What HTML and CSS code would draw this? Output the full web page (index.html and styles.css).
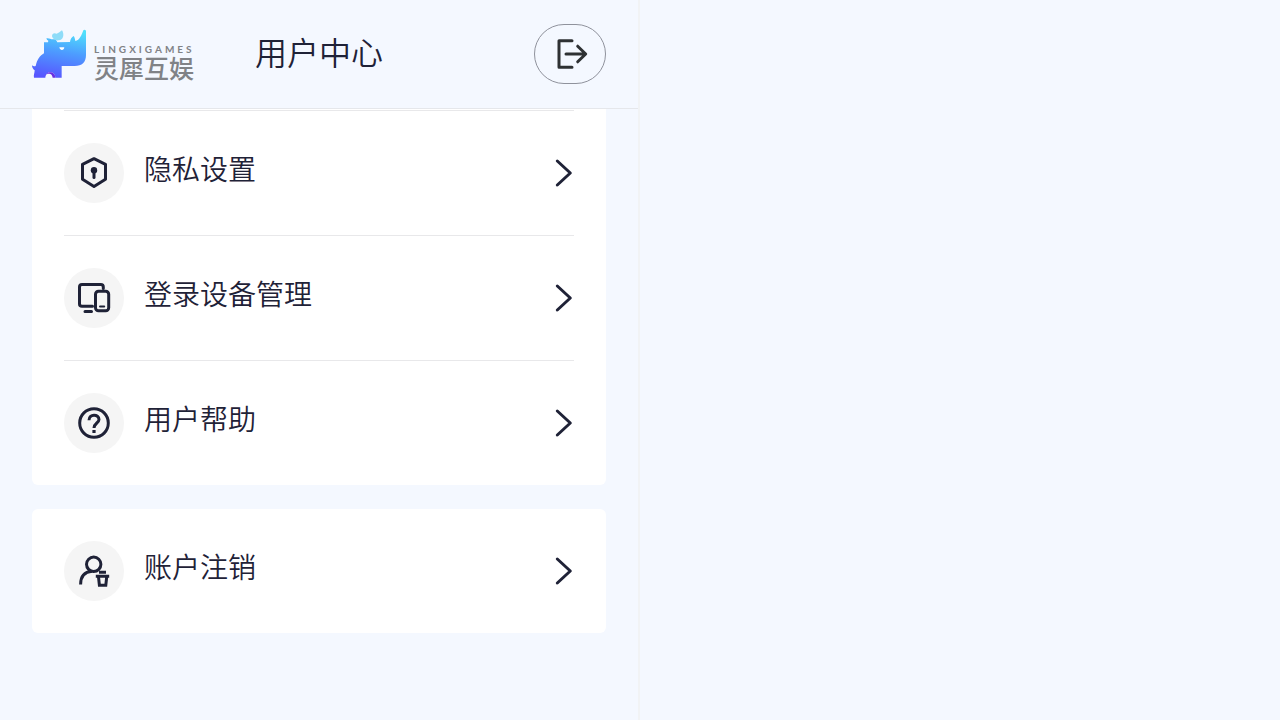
FILE: index.html
```
<!DOCTYPE html>
<html lang="zh-CN">
<head>
  <meta charset="UTF-8">
  <meta name="viewport" content="width=device-width, initial-scale=1.0">
  <title>用户中心</title>
  <link rel="stylesheet" href="styles.css">
</head>
<body>
  <div class="panel">
    <header class="header">
      <a class="logo" href="#">
        <svg class="logo-mark" viewBox="0 0 168 150" aria-hidden="true">
          <defs>
            <linearGradient id="body" x1="0.6" y1="0" x2="0.4" y2="1">
              <stop offset="0" stop-color="#4fe0fb"/>
              <stop offset="0.45" stop-color="#4d9dff"/>
              <stop offset="1" stop-color="#5757ff"/>
            </linearGradient>
          </defs>
          <path d="M60 22C60 14 66 10 74 14C80 12 84 8 90 4C98 16 94 34 80 34C70 35 62 30 60 22Z" fill="#8edcf8"/>
          <path d="M43 28C50 26 56 30 62 31C68 30 74 32 76 40L114 39C115 31 119 24 125 21C128 25 129 30 130 36C143 34 149 18 154 4Q158 0 162 5V78C162 100 150 111 128 111H89V146H70C70 124 40 124 40 146H6C4 138 8 132 8 124C4 122 0 116 0 109C4 113 8 112 11 111C15 92 24 80 36 73V40H48L49 35Q44 34 43 28Z" fill="url(#body)"/>
          <path d="M40 146C40 124 70 124 70 146H62C60 136 54 130 40 138Z" fill="#6a2fe0"/>
          <path d="M82 55H97C96 66 84 66 82 55Z" fill="#fff"/>
        </svg>
        <span class="logo-text">
          <span class="logo-en">LINGXIGAMES</span>
          <span class="logo-cn">灵犀互娱</span>
        </span>
      </a>
      <h1 class="title">用户中心</h1>
      <button class="logout" type="button" aria-label="退出登录">
        <svg viewBox="0 0 72 60" aria-hidden="true">
          <path d="M38 16.7H25V43.2H38M32 30H51M43.7 22.2L51.7 30L43.7 37.8"/>
        </svg>
      </button>
    </header>

    <main class="content">
      <nav class="card card-joined">
        <a class="item" href="#">
          <svg class="icon" viewBox="0 0 60 60" aria-hidden="true">
            <path d="M30 15.7L41.5 21.3V36.3L30 43.6L18.5 36.3V21.3Z"/>
            <circle class="solid" cx="30" cy="27.3" r="3.2"/>
            <path d="M30 28V34.5"/>
          </svg>
          <span class="label">隐私设置</span>
          <svg class="arrow" viewBox="0 0 20 30" aria-hidden="true"><path d="M3.3 3L16.3 15L3.3 27"/></svg>
        </a>
        <a class="item" href="#">
          <svg class="icon" viewBox="0 0 60 60" aria-hidden="true">
            <path d="M39.3 20.5V19Q39.3 16.5 36.8 16.5H18Q15.5 16.5 15.5 19V36Q15.5 38.3 18 38.3H28.5M21 43.6H27.5"/>
            <rect x="31.5" y="23.3" width="13.2" height="19.5" rx="3"/>
            <path class="thin" d="M36 38.6H40.2"/>
          </svg>
          <span class="label">登录设备管理</span>
          <svg class="arrow" viewBox="0 0 20 30" aria-hidden="true"><path d="M3.3 3L16.3 15L3.3 27"/></svg>
        </a>
        <a class="item" href="#">
          <svg class="icon" viewBox="0 0 60 60" aria-hidden="true">
            <circle cx="30" cy="30" r="14.3"/>
            <path class="butt" d="M25 27.2C25 20.6 35 20.6 35 26.6C35 30 30 30.2 30 35"/>
            <rect class="solid" x="28.4" y="37" width="3.2" height="3"/>
          </svg>
          <span class="label">用户帮助</span>
          <svg class="arrow" viewBox="0 0 20 30" aria-hidden="true"><path d="M3.3 3L16.3 15L3.3 27"/></svg>
        </a>
      </nav>

      <nav class="card">
        <a class="item" href="#">
          <svg class="icon" viewBox="0 0 60 60" aria-hidden="true">
            <circle cx="29.7" cy="23.3" r="7.2"/>
            <path class="butt" d="M16.6 43.5C16.6 35 21 30.8 28 30.3"/>
            <path class="butt" d="M35 31.3H42M31.8 35.2H45.2M34.4 35L35.4 44.2H41.8L42.8 35"/>
          </svg>
          <span class="label">账户注销</span>
          <svg class="arrow" viewBox="0 0 20 30" aria-hidden="true"><path d="M3.3 3L16.3 15L3.3 27"/></svg>
        </a>
      </nav>
    </main>
  </div>
</body>
</html>
```
FILE: styles.css
```
* {
  box-sizing: border-box;
}
body {
  margin: 0;
  background: #f4f8ff;
  color: #1f2237;
  font-family: "Noto Sans CJK SC", sans-serif;
  font-weight: 350;
}
a {
  color: inherit;
  text-decoration: none;
}
.panel {
  width: 50%;
  min-height: 100vh;
  border-right: 2px solid #f1f3f5;
}

/* Header */
.header {
  display: grid;
  grid-template-columns: 1fr auto 1fr;
  align-items: center;
  padding: 24px 32px;
  border-bottom: 1px solid #e5e7eb;
}
.logo {
  display: flex;
  align-items: center;
  gap: 6px;
}
.logo-mark {
  width: 56px;
  height: 50px;
}
.logo-text {
  display: flex;
  flex-direction: column;
  padding-top: 18px;
  color: #808286;
  white-space: nowrap;
}
.logo-en {
  font: 700 10px/12px Lato, sans-serif;
  letter-spacing: 3px;
}
.logo-cn {
  font: 500 25px/28px "Liberation Sans", "Noto Sans CJK SC", sans-serif;
}
.title {
  margin: 0;
  padding-bottom: 6px;
  font-size: 32px;
  font-weight: 350;
  line-height: 48px;
}
.logout {
  justify-self: end;
  width: 72px;
  height: 60px;
  padding: 0;
  border: 1px solid #8f929c;
  border-radius: 30px;
  background: none;
}
.logout svg {
  display: block;
  width: 72px;
  height: 60px;
  margin: -1px;
  fill: none;
  stroke: #2e3133;
  stroke-width: 3;
  stroke-linecap: round;
  stroke-linejoin: round;
}

/* Menu cards */
.card {
  margin: 0 32px 24px;
  padding: 0 32px;
  border-radius: 6px;
  background: #fff;
}
.card-joined {
  padding-top: 1px;
  border-radius: 0 0 6px 6px;
}
.item {
  display: flex;
  align-items: center;
  gap: 20px;
  padding: 32px 0;
}
.item + .item,
.card-joined .item {
  border-top: 1px solid #e8e8ea;
}
.icon {
  width: 60px;
  height: 60px;
  border-radius: 50%;
  background: #f5f5f5;
  fill: none;
  stroke: #1f2237;
  stroke-width: 3;
  stroke-linecap: round;
  stroke-linejoin: round;
}
.icon .solid {
  fill: #1f2237;
  stroke: none;
}
.icon .thin {
  stroke-width: 2;
}
.icon .butt {
  stroke-linecap: butt;
  stroke-linejoin: miter;
}
.label {
  flex: 1;
  padding-bottom: 10px;
  font-size: 28px;
  line-height: 40px;
}
.arrow {
  width: 20px;
  height: 30px;
  fill: none;
  stroke: #1f2237;
  stroke-width: 3;
  stroke-linecap: round;
  stroke-linejoin: round;
}
```
